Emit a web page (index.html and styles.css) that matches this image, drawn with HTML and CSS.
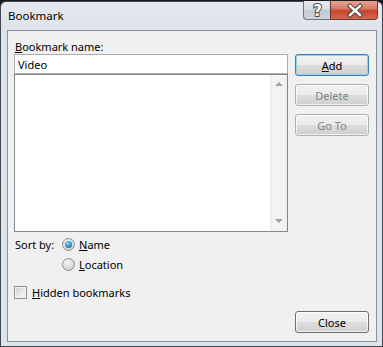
FILE: index.html
```html
<!DOCTYPE html>
<html lang="en">

<head>
    <meta charset="UTF-8">
    <meta name="viewport" content="width=device-width, initial-scale=1.0">
    <title>Bookmark</title>
    <link rel="stylesheet" href="styles.css">
</head>

<body>
    <div class="window">
        <div class="titlebar">
            <span class="title">Bookmark</span>
            <div class="caption-buttons">
                <div class="cap-btn help">
                    <svg width="27" height="19" viewBox="0 0 27 19">
                        <text x="13.5" y="15" text-anchor="middle" class="cap-glyph">?</text>
                    </svg>
                </div>
                <div class="cap-btn close">
                    <svg width="48" height="19" viewBox="0 0 48 19">
                        <path d="M19 5 L29 14 M29 5 L19 14" stroke="#3b3b3b" stroke-width="4.2" stroke-linecap="square" fill="none" />
                        <path d="M19 5 L29 14 M29 5 L19 14" stroke="#ffffff" stroke-width="2.4" stroke-linecap="square" fill="none" />
                    </svg>
                </div>
            </div>
        </div>

        <div class="client">
            <div class="main">
                <label class="field-label" for="name"><u>B</u>ookmark name:</label>
                <input type="text" id="name" class="textbox" value="Video">
                <div class="listbox">
                    <div class="list-items"></div>
                    <div class="scrollbar">
                        <span class="arrow up"></span>
                        <span class="arrow down"></span>
                    </div>
                </div>

                <div class="sort">
                    <span class="sort-label">Sort by:</span>
                    <div class="radios">
                        <div class="option">
                            <span class="radio checked"><span class="dot"></span></span>
                            <span><u>N</u>ame</span>
                        </div>
                        <div class="option">
                            <span class="radio"></span>
                            <span><u>L</u>ocation</span>
                        </div>
                    </div>
                </div>

                <div class="option hidden-row">
                    <span class="checkbox"></span>
                    <span><u>H</u>idden bookmarks</span>
                </div>
            </div>

            <div class="side">
                <button class="btn default"><u>A</u>dd</button>
                <button class="btn" disabled>Delete</button>
                <button class="btn" disabled>Go To</button>
                <button class="btn close-btn">Close</button>
            </div>
        </div>
    </div>
</body>

</html>
```

FILE: styles.css
```css
body {
    margin: 0;
    background-color: #1b1b1b;
    font-family: "Noto Sans", "Open Sans", sans-serif;
    font-size: 11px;
    color: #000;
}

.window {
    margin-top: 1px;
    width: 383px;
    height: 346px;
    box-sizing: border-box;
    border: 1px solid #3f4650;
    border-radius: 6px 6px 0 0;
    background: linear-gradient(180deg, #e4e9ef 0%, #dde3ea 30px, #dfe4ea 100%);
    padding: 0 5px 4px 6px;
    display: flex;
    flex-direction: column;
}

.titlebar {
    height: 28px;
    display: flex;
    align-items: center;
    padding-left: 1px;
}

.title {
    font-size: 11.5px;
    margin-top: -1px;
}

.caption-buttons {
    margin-left: auto;
    margin-right: -1px;
    align-self: flex-start;
    margin-top: -1px;
    display: flex;
}

.cap-btn {
    height: 19px;
    box-sizing: border-box;
    border: 1px solid #6d737b;
    border-top: none;
}

.cap-btn svg {
    display: block;
}

.help {
    width: 27px;
    border-radius: 0 0 0 4px;
    border-right: none;
    background: linear-gradient(180deg, #e6eaef 0%, #d7dde5 45%, #c3cad3 55%, #cdd4dc 100%);
}

.cap-glyph {
    font-family: "DejaVu Sans", sans-serif;
    font-size: 15px;
    font-weight: bold;
    fill: #ffffff;
    stroke: #4a4f55;
    stroke-width: 2px;
    paint-order: stroke;
}

.close {
    width: 48px;
    border-radius: 0 0 4px 0;
    border-color: #6b3a35;
    background: linear-gradient(180deg, #e8a493 0%, #d97e6a 40%, #c6452f 55%, #d36a50 100%);
}

.client {
    flex: 1;
    border: 1px solid #8a9098;
    background-color: #f0f0f0;
    padding: 8px 7px 8px 6px;
    display: flex;
    gap: 7px;
}

.main {
    width: 274px;
    display: flex;
    flex-direction: column;
}

.field-label {
    line-height: 15px;
    height: 15px;
    padding-left: 1px;
}

.textbox {
    height: 20px;
    width: 100%;
    box-sizing: border-box;
    margin: 0;
    border: 1px solid #abadb3;
    padding: 0 3px;
    font-family: inherit;
    font-size: 11px;
    color: #000;
    background: #fff;
    outline: none;
}

.listbox {
    height: 158px;
    box-sizing: border-box;
    border: 1px solid #828790;
    background: #fff;
    display: flex;
}

.list-items {
    flex: 1;
}

.scrollbar {
    width: 17px;
    background: linear-gradient(90deg, #e6e6e6 0, #f3f3f3 2px, #f3f3f3 15px, #e8e8e8 100%);
    display: flex;
    flex-direction: column;
    justify-content: space-between;
    align-items: center;
    padding: 7px 0 8px;
    box-sizing: border-box;
}

.arrow {
    width: 0;
    height: 0;
    border-left: 4px solid transparent;
    border-right: 4px solid transparent;
}

.arrow.up {
    border-bottom: 4px solid #a3a3a3;
}

.arrow.down {
    border-top: 4px solid #a3a3a3;
}

.sort {
    margin-top: 5px;
    display: flex;
    padding-left: 1px;
}

.sort-label {
    width: 47px;
    line-height: 15px;
}

.radios {
    display: flex;
    flex-direction: column;
    gap: 5px;
}

.option {
    display: flex;
    align-items: center;
    gap: 4px;
    line-height: 15px;
    height: 15px;
}

.radio {
    width: 13px;
    height: 13px;
    box-sizing: border-box;
    border-radius: 50%;
    border: 1px solid #8e8f8f;
    background: radial-gradient(circle at 40% 35%, #f4f4f4 0%, #dcdcdc 55%, #bdbdbd 100%);
    display: flex;
    align-items: center;
    justify-content: center;
}

.radio .dot {
    width: 7px;
    height: 7px;
    border-radius: 50%;
    background: radial-gradient(circle at 40% 35%, #8ad4f6 0%, #2e8ec5 55%, #0b4e86 100%);
}

.hidden-row {
    margin-top: 13px;
    gap: 5px;
}

.checkbox {
    width: 13px;
    height: 13px;
    box-sizing: border-box;
    border: 1px solid #8e8f8f;
    background: linear-gradient(135deg, #cfcfcf 0%, #ececec 60%, #f8f8f8 100%);
    box-shadow: inset 0 0 0 1px #f4f4f4;
}

.side {
    width: 74px;
    padding-top: 15px;
    display: flex;
    flex-direction: column;
    gap: 8px;
}

.btn {
    height: 22px;
    width: 74px;
    margin: 0;
    padding: 0;
    box-sizing: border-box;
    border: 1px solid #707070;
    border-radius: 3px;
    font-family: inherit;
    font-size: 11px;
    color: #000;
    background: linear-gradient(180deg, #f2f2f2 0%, #ebebeb 48%, #dddddd 52%, #cfcfcf 100%);
    box-shadow: inset 0 0 0 1px rgba(255, 255, 255, 0.7);
}

.btn:disabled {
    color: #838383;
    border-color: #adb2b5;
}

.btn.default {
    border-color: #3c7fb1;
    box-shadow: inset 0 0 0 1px #90d3f6;
}

.close-btn {
    margin-top: auto;
}
```
